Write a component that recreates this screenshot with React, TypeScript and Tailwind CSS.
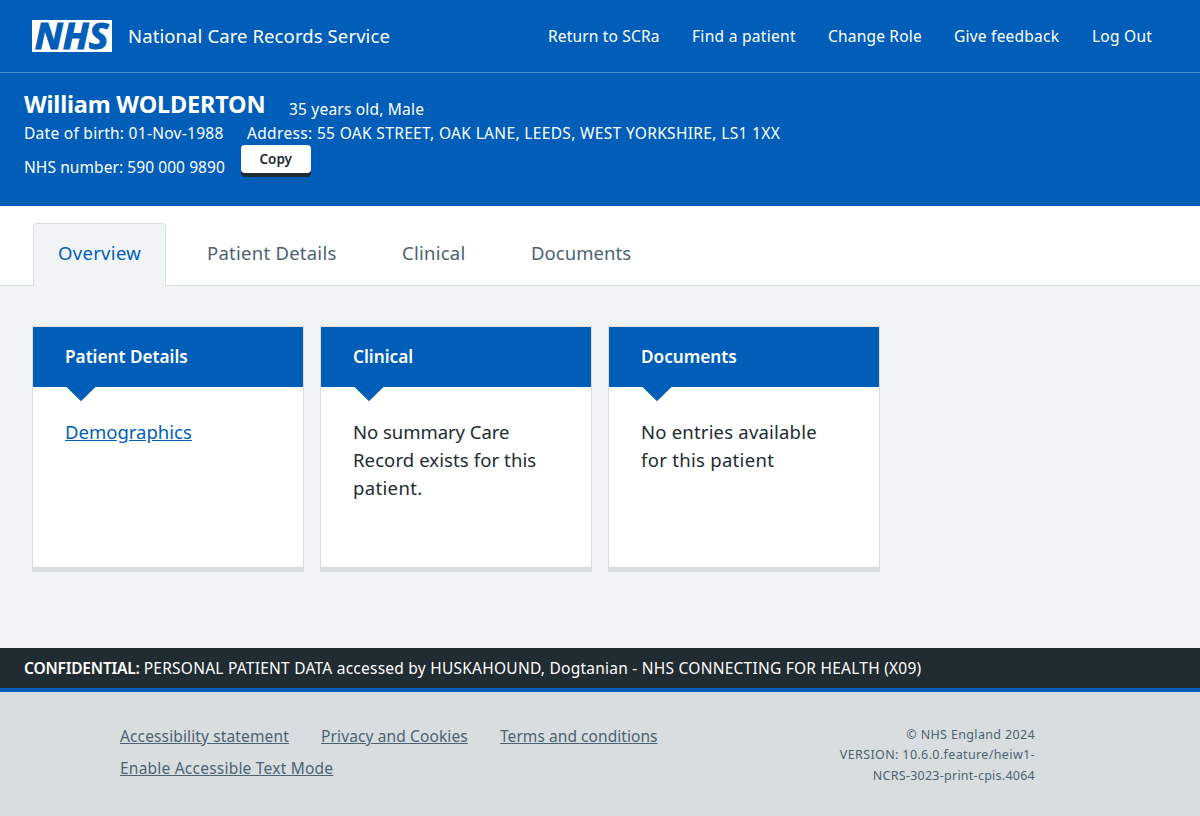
import React from 'react';

const navItems = [
  { label: 'Return to SCRa', style: 'w-[112px] tracking-[0.17px]' },
  { label: 'Find a patient', style: 'w-[104px] tracking-[0.3px]' },
  { label: 'Change Role', style: 'w-[94px] tracking-[0.2px]' },
  { label: 'Give feedback', style: 'w-[106px] tracking-[0.23px]' },
  { label: 'Log Out', style: 'w-[60px] tracking-[0.25px]' },
];

function Logo() {
  return (
    <svg className="h-8 w-20 overflow-visible" viewBox="0 0 80 32" role="img" aria-label="NHS">
      <rect width="80" height="32" fill="#fff" />
      <text
        x="2.8"
        y="28.6"
        fill="#005eb8"
        stroke="#005eb8"
        strokeWidth="1.1"
        fontFamily="'Open Sans', sans-serif"
        fontWeight="700"
        fontStyle="italic"
        fontSize="35.5"
        textLength="73.5"
        lengthAdjust="spacingAndGlyphs"
      >
        NHS
      </text>
    </svg>
  );
}

function Header() {
  return (
    <header className="flex h-[73px] items-center border-b border-[#4c8ecd] pl-8 pr-12 text-white">
      <Logo />
      <span className="ml-4 whitespace-nowrap text-[18.5px] leading-7 tracking-[0.1px]">National Care Records Service</span>
      <nav className="ml-auto flex gap-8 text-[15.5px] leading-6">
        {navItems.map((item) => (
          <a key={item.label} href="#" className={'whitespace-nowrap ' + item.style}>
            {item.label}
          </a>
        ))}
      </nav>
    </header>
  );
}

function PatientBanner() {
  return (
    <section className="h-[133px] px-6 pt-4 text-[15.5px] leading-6 text-white">
      <div className="flex h-8 items-baseline whitespace-nowrap">
        <h1 className="w-[265px] text-[23.5px] font-bold leading-[30px] tracking-[-0.19px]">William WOLDERTON</h1>
        <span className="relative top-[2px] tracking-[0.2px]">35 years old, Male</span>
      </div>
      <div className="flex whitespace-nowrap">
        <span className="w-[223px] tracking-[0.28px]">Date of birth: 01-Nov-1988</span>
        <span className="tracking-[0.34px]">Address: 55 OAK STREET, OAK LANE, LEEDS, WEST YORKSHIRE, LS1 1XX</span>
      </div>
      <div className="flex whitespace-nowrap">
        <span className="w-[217px] pt-2.5 tracking-[0.08px]">NHS number: 590 000 9890</span>
        <button className="h-7 w-[69.5px] rounded-[4px] bg-white text-[13.5px] font-semibold leading-7 text-[#212b32] shadow-[0_4px_0_#212b32]">
          Copy
        </button>
      </div>
    </section>
  );
}

function Tabs() {
  return (
    <nav className="flex h-20 items-end border-b border-[#d8dde0] bg-white pl-[33px] text-[18.5px] leading-7 text-[#4c6272]">
      <a href="#" className="-mb-px h-[63px] w-[133px] rounded-t-[4px] border border-b-0 border-[#d8dde0] bg-[#f0f4f5] pl-6 pt-[15px] tracking-[0.3px] text-[#005eb8]">
        Overview
      </a>
      <a href="#" className="ml-[41px] h-[62px] w-[195px] whitespace-nowrap pt-4 tracking-[0.25px]">Patient Details</a>
      <a href="#" className="h-[62px] w-[129px] pt-4 tracking-[0.25px]">Clinical</a>
      <a href="#" className="h-[62px] pt-4 tracking-[0.06px]">Documents</a>
    </nav>
  );
}

function Card({ title, children }: { title: string; children: React.ReactNode }) {
  return (
    <article className="h-[246px] w-[272px] border border-b-[5px] border-[#d8dde0] bg-white">
      <h2 className="relative h-[60px] bg-[#005eb8] pl-8 pt-4 text-[17.2px] font-semibold leading-7 text-white">
        {title}
        <svg className="absolute left-[33px] top-[60px] h-[15px] w-[30px]" viewBox="0 0 30 15">
          <path d="M0.5 0h29L15 14.3z" fill="#005eb8" />
        </svg>
      </h2>
      <div className="whitespace-nowrap pl-8 pt-[31px] text-[18.5px] leading-7 text-[#212b32]">{children}</div>
    </article>
  );
}

function Footer() {
  return (
    <footer className="flex h-32 justify-between border-t-4 border-[#005eb8] bg-[#d8dde0] pl-[120px] pr-[165px] pt-8 text-[#4c6272]">
      <div className="flex flex-col gap-2 whitespace-nowrap text-[15.5px] leading-6">
        <div className="flex">
          <a href="#" className="w-[201px]"><span className="tracking-[0.13px] underline">Accessibility statement</span></a>
          <a href="#" className="w-[179px]"><span className="tracking-[0.12px] underline">Privacy and Cookies</span></a>
          <a href="#" className="tracking-[0.06px] underline">Terms and conditions</a>
        </div>
        <a href="#" className="self-start tracking-[0.22px] underline">Enable Accessible Text Mode</a>
      </div>
      <p className="whitespace-nowrap pt-px text-right text-[12.5px] leading-[20.4px]">
        <span className="tracking-[0.35px]">© NHS England 2024</span>
        <br />
        <span className="tracking-[0.37px]">VERSION: 10.6.0.feature/heiw1-</span>
        <br />
        <span className="tracking-[0.25px]">NCRS-3023-print-cpis.4064</span>
      </p>
    </footer>
  );
}

export default function App() {
  return (
    <div className="flex h-[816px] w-[1200px] flex-col overflow-hidden bg-[#f0f4f5] font-['Noto_Sans',sans-serif]">
      <div className="bg-[#005eb8]">
        <Header />
        <PatientBanner />
      </div>
      <Tabs />
      <main className="flex flex-1 gap-4 pl-8 pt-10">
        <Card title="Patient Details">
          <a href="#" className="text-[#005eb8] underline">Demographics</a>
        </Card>
        <Card title="Clinical">
          <span className="tracking-[-0.04px]">No summary Care</span>
          <br />
          <span className="tracking-[0.1px]">Record exists for this</span>
          <br />
          <span className="tracking-[0.35px]">patient.</span>
        </Card>
        <Card title="Documents">
          <span className="tracking-[0.2px]">No entries available</span>
          <br />
          <span className="tracking-[0.3px]">for this patient</span>
        </Card>
      </main>
      <div className="h-10 whitespace-nowrap bg-[#212b32] px-6 py-2 text-[15.5px] leading-6 text-white">
        <strong className="font-semibold tracking-[-0.19px]">CONFIDENTIAL:</strong>{' '}
        <span className="tracking-[0.24px]">PERSONAL PATIENT DATA accessed by HUSKAHOUND, Dogtanian - NHS CONNECTING FOR HEALTH (X09)</span>
      </div>
      <Footer />
    </div>
  );
}
